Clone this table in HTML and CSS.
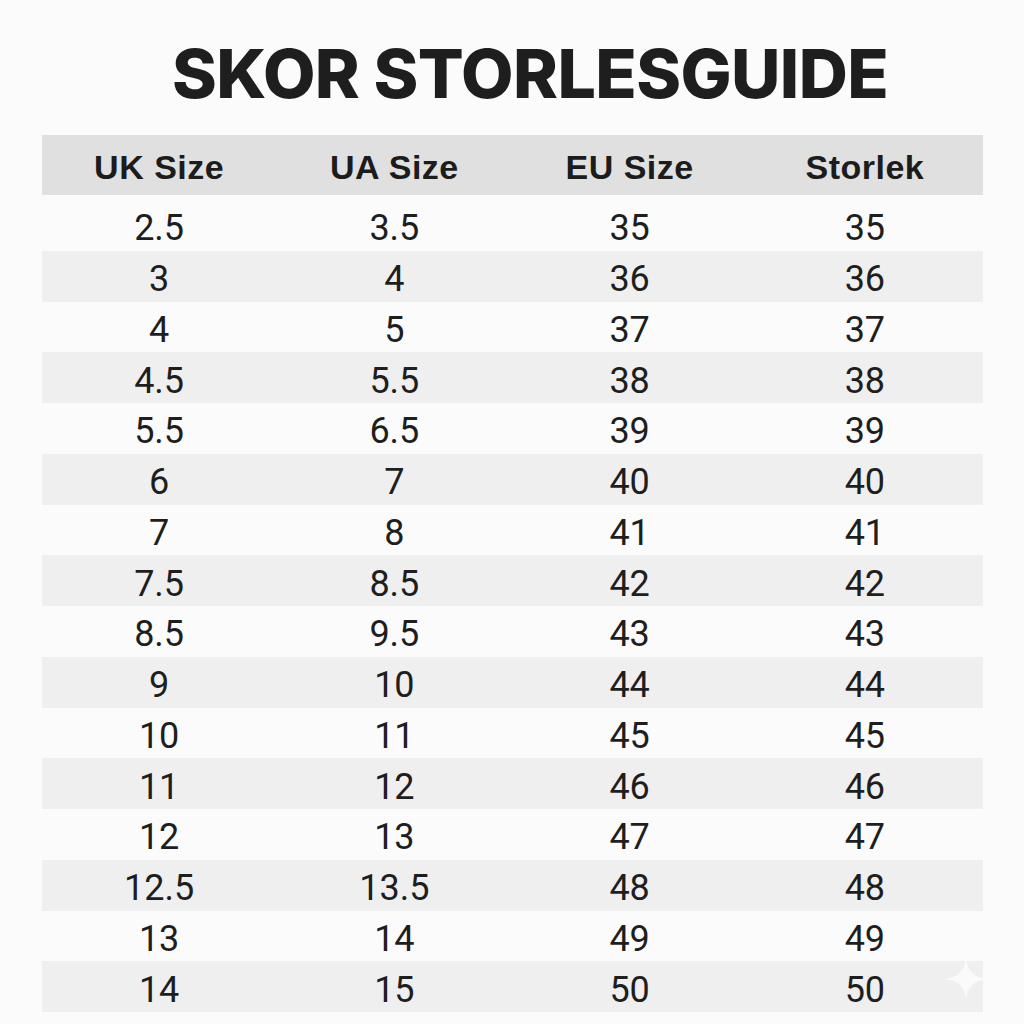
FILE: index.html
```html
<!DOCTYPE html>
<html lang="sv">
<head>
<meta charset="utf-8">
<title>Skor storleksguide</title>
<link rel="stylesheet" href="styles.css">
</head>
<body>
<main class="page">
  <h1 class="title">SKOR STORLESGUIDE</h1>
  <div class="table">
    <div class="head">
      <div>UK Size</div><div>UA Size</div><div>EU Size</div><div>Storlek</div>
    </div>
    <div class="body">
      <div class="row"><div>2.5</div><div>3.5</div><div>35</div><div>35</div></div>
      <div class="row"><div>3</div><div>4</div><div>36</div><div>36</div></div>
      <div class="row"><div>4</div><div>5</div><div>37</div><div>37</div></div>
      <div class="row"><div>4.5</div><div>5.5</div><div>38</div><div>38</div></div>
      <div class="row"><div>5.5</div><div>6.5</div><div>39</div><div>39</div></div>
      <div class="row"><div>6</div><div>7</div><div>40</div><div>40</div></div>
      <div class="row"><div>7</div><div>8</div><div>41</div><div>41</div></div>
      <div class="row"><div>7.5</div><div>8.5</div><div>42</div><div>42</div></div>
      <div class="row"><div>8.5</div><div>9.5</div><div>43</div><div>43</div></div>
      <div class="row"><div>9</div><div>10</div><div>44</div><div>44</div></div>
      <div class="row"><div>10</div><div>11</div><div>45</div><div>45</div></div>
      <div class="row"><div>11</div><div>12</div><div>46</div><div>46</div></div>
      <div class="row"><div>12</div><div>13</div><div>47</div><div>47</div></div>
      <div class="row"><div>12.5</div><div>13.5</div><div>48</div><div>48</div></div>
      <div class="row"><div>13</div><div>14</div><div>49</div><div>49</div></div>
      <div class="row"><div>14</div><div>15</div><div>50</div><div>50</div></div>
    </div>
    <svg class="sparkle" viewBox="0 0 40 40" aria-hidden="true">
      <path d="M20 0 C21 12 28 19 40 20 C28 21 21 28 20 40 C19 28 12 21 0 20 C12 19 19 12 20 0 Z"/>
    </svg>
  </div>
</main>
</body>
</html>
```
FILE: styles.css
```css
html, body {
  margin: 0;
  padding: 0;
  background: #fbfbfb;
}
.page {
  width: 1024px;
  height: 1024px;
  box-sizing: border-box;
  padding-top: 33px;
  display: flex;
  flex-direction: column;
  align-items: center;
}
.title {
  margin: 0 0 0 36px;
  font-family: Inter, "Liberation Sans", sans-serif;
  font-weight: 800;
  font-size: 68px;
  line-height: 80px;
  color: #1e1e1e;
  letter-spacing: -0.6px;
}
.table {
  position: relative;
  margin-top: 22px;
  width: 941px;
}
.head {
  display: grid;
  grid-template-columns: repeat(4, 1fr);
  height: 60px;
  align-items: center;
  background: #e0e0e0;
  font-family: "Liberation Sans", Arial, sans-serif;
  font-weight: 700;
  font-size: 34px;
  color: #1c1c1c;
  text-align: center;
  letter-spacing: 0.5px;
}
.head > div { padding-top: 4px; }
.body {
  margin-top: 5px;
}
.row {
  display: grid;
  grid-template-columns: repeat(4, 1fr);
  height: 50.75px;
  align-items: center;
  font-family: Roboto, "Liberation Sans", sans-serif;
  font-weight: 400;
  font-size: 36px;
  color: #1e1e1e;
  text-align: center;
}
.row > div { padding-top: 6px; }
.row:nth-child(even) {
  background: #efefef;
}
.sparkle {
  position: absolute;
  right: -4px;
  bottom: 12px;
  width: 42px;
  height: 42px;
  fill: #fafafa;
}
```
